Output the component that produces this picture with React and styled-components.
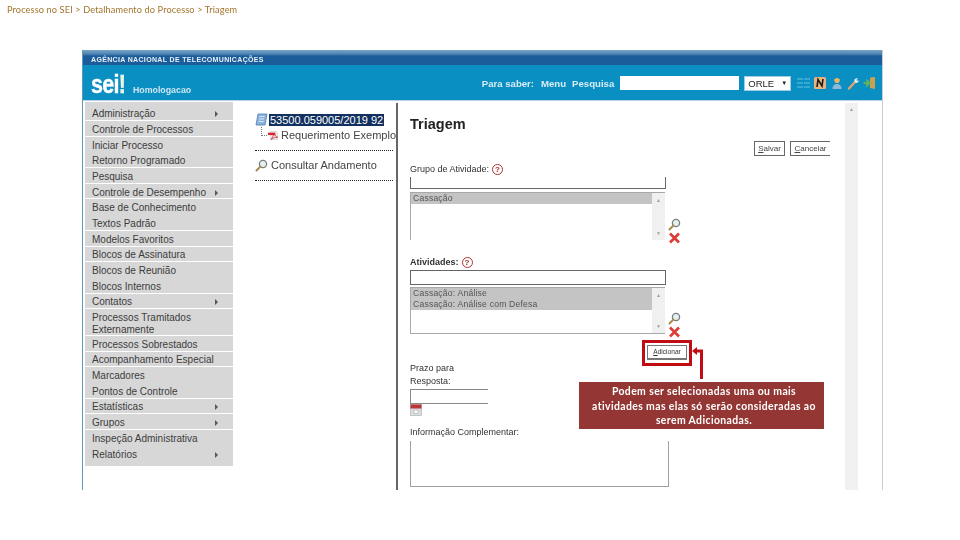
import React from "react";
import styled, { createGlobalStyle } from "styled-components";

const menuItems = [
  { label: "Administração", arrow: true, h: 19, pad: "5px 15px 0 7px" },
  { label: "Controle de Processos" },
  { label: "Iniciar Processo", flush: true },
  { label: "Retorno Programado" },
  { label: "Pesquisa" },
  { label: "Controle de Desempenho", arrow: true },
  { label: "Base de Conhecimento", flush: true },
  { label: "Textos Padrão" },
  { label: "Modelos Favoritos" },
  { label: "Blocos de Assinatura" },
  { label: "Blocos de Reunião", flush: true },
  { label: "Blocos Internos" },
  { label: "Contatos", arrow: true },
  { label: "Processos Tramitados Externamente", h: 26.6, pad: "4px 15px 0 7px" },
  { label: "Processos Sobrestados" },
  { label: "Acompanhamento Especial" },
  { label: "Marcadores", flush: true },
  { label: "Pontos de Controle" },
  { label: "Estatísticas", arrow: true },
  { label: "Grupos", arrow: true },
  { label: "Inspeção Administrativa", flush: true },
  { label: "Relatórios", arrow: true, h: 20, pad: "0 15px 1px 7px", flush: true },
];

const GlobalStyle = createGlobalStyle`
  html, body {
    margin: 0;
    padding: 0;
    background: #fff;
  }
  body {
    width: 960px;
    height: 540px;
    overflow: hidden;
    font-family: "Liberation Sans", Arial, sans-serif;
  }
`;

const Page = styled.div`
  position: relative;
  width: 960px;
  height: 540px;
  padding: 4px 0 0 7px;
  box-sizing: border-box;
`;

const PageTitle = styled.div`
  font-family: "Lato", sans-serif;
  font-size: 9.2px;
  line-height: 12px;
  letter-spacing: 0.12px;
  color: #a3752c;
  height: 12px;
  filter: blur(0.25px);
`;

const Frame = styled.div`
  width: 801px;
  height: 440px;
  margin: 34px 0 0 75px;
  display: flex;
  flex-direction: column;
  border-left: 1px solid #5e9bb8;
  border-right: 1px solid #c9ced3;
  box-sizing: border-box;
  filter: blur(0.45px);
`;

const AgencyBar = styled.div`
  height: 15px;
  flex: none;
  background: linear-gradient(#7aa2c6 0, #4d85b4 4px, #1b5c9a 6px, #1b5c9a 100%);
  color: #e8f0f6;
  font-size: 7px;
  font-weight: bold;
  line-height: 20px;
  letter-spacing: 0.34px;
  padding-left: 8px;
`;

const HeaderBar = styled.div`
  height: 35px;
  flex: none;
  background: #0a8fc3;
  box-shadow: 0 1px 0 #b7d7e6;
  display: flex;
  align-items: flex-start;
  padding: 0 6px 0 8px;
`;

const LogoSlot = styled.div`
  width: 42px;
  flex: none;
  margin-top: 7px;
`;

const Logo = styled.div`
  font-size: 25px;
  font-weight: bold;
  line-height: 24px;
  letter-spacing: -0.8px;
  color: #fff;
  -webkit-text-stroke: 0.4px #fff;
  transform: scaleX(0.86);
  transform-origin: left center;
  span {
    color: #eef5d6;
  }
`;

const Environment = styled.div`
  font-size: 8.8px;
  font-weight: bold;
  color: #cde6f1;
  margin-top: 20px;
  flex: 1;
`;

const HeaderNav = styled.div`
  display: flex;
  align-items: center;
  margin-top: 10px;
  height: 16px;
  color: #d8edf5;
  font-size: 9.6px;
  font-weight: bold;
`;

const NavLink = styled.span`
  margin-right: ${(p) => p.$gap}px;
  white-space: nowrap;
`;

const SearchInput = styled.div`
  width: 119px;
  height: 14px;
  background: #fff;
  margin-right: 5px;
`;

const UnitSelect = styled.div`
  width: 47px;
  height: 15px;
  background: #fff;
  border: 1px solid #9ccde2;
  box-sizing: border-box;
  color: #222;
  font-weight: normal;
  font-size: 9.5px;
  line-height: 13px;
  padding: 0 3px;
  margin-right: 6px;
  display: flex;
  justify-content: space-between;
  span {
    font-size: 6px;
  }
`;

const HeaderIcons = styled.div`
  display: flex;
  align-items: center;
  gap: 4.2px;
`;

const Body = styled.div`
  flex: 1;
  display: flex;
  min-height: 0;
`;

const Menu = styled.div`
  width: 148px;
  flex: none;
  margin: 2px 0 0 2px;
  display: flex;
  flex-direction: column;
  align-self: flex-start;
`;

const MenuItem = styled.div`
  height: ${(p) => p.$h}px;
  background: #d7d7d7;
  border-bottom: 1px solid ${(p) => (p.$flush ? "#d7d7d7" : "#fff")};
  box-sizing: border-box;
  display: flex;
  justify-content: space-between;
  align-items: center;
  padding: ${(p) => p.$pad};
  color: #3c3c3c;
  font-size: 10px;
  line-height: 12px;
`;

const MenuLabel = styled.span`
  width: ${(p) => (p.$wrap ? "100px" : "auto")};
  white-space: ${(p) => (p.$wrap ? "normal" : "nowrap")};
`;

const Arrow = styled.span`
  width: 0;
  height: 0;
  border-left: 3px solid #555;
  border-top: 3px solid transparent;
  border-bottom: 3px solid transparent;
`;

const TreePanel = styled.div`
  width: 165px;
  flex: none;
  padding: 10px 0 0 22px;
  box-sizing: border-box;
  border-right: 2px solid #666;
  margin-top: 3px;
  overflow: hidden;
  white-space: nowrap;
  color: #444;
  font-size: 11px;
`;

const TreeRow = styled.div`
  display: flex;
  align-items: center;
  height: ${(p) => p.$h}px;
  padding-left: ${(p) => p.$indent || 0}px;
  gap: ${(p) => p.$gap || 0}px;
`;

const ProcessNumber = styled.span`
  background: #12315f;
  color: #fff;
  font-size: 11px;
  line-height: 12px;
  padding: 0 1px;
  margin-left: 1px;
`;

const TreeConnector = styled.span`
  width: 6px;
  height: 8px;
  margin-bottom: 8px;
  border-left: 1px dotted #777;
  border-bottom: 1px dotted #777;
`;

const PdfLabel = styled.span`
  margin-left: 2px;
`;

const DashedRule = styled.div`
  border-top: 1px dotted #222;
  margin-top: ${(p) => p.$top}px;
  width: 138px;
`;

const FormPanel = styled.div`
  width: 432px;
  flex: none;
  padding: 16px 0 0 12px;
  box-sizing: border-box;
  color: #333;
  font-size: 9px;
`;

const Heading = styled.div`
  font-size: 14.5px;
  font-weight: bold;
  line-height: 16px;
  color: #222;
`;

const ActionRow = styled.div`
  display: flex;
  justify-content: flex-end;
  gap: 5px;
  margin-top: 9px;
  height: 15px;
`;

const ActionButton = styled.div`
  border: 1px solid #666;
  border-right-width: ${(p) => (p.$cut ? 0 : 1)}px;
  width: ${(p) => p.$w}px;
  box-sizing: border-box;
  text-align: center;
  font-size: 8px;
  line-height: 13px;
  color: #444;
`;

const FieldLabel = styled.div`
  display: flex;
  align-items: center;
  gap: 3px;
  font-size: 9px;
  line-height: 11px;
  height: 11px;
  margin-top: ${(p) => p.$top}px;
  color: #333;
  font-weight: ${(p) => (p.$bold ? 600 : 400)};
`;

const HelpMark = styled.span`
  width: 9px;
  height: 9px;
  border: 1.5px solid #b03030;
  border-radius: 50%;
  color: #a52a2a;
  font-size: 8px;
  font-weight: bold;
  line-height: 9px;
  text-align: center;
`;

const TextBox = styled.div`
  width: 256px;
  height: ${(p) => p.$h}px;
  margin-top: ${(p) => p.$top}px;
  border: 1px solid #666;
  border-top-width: ${(p) => (p.$open ? 0 : 1)}px;
  box-sizing: border-box;
`;

const ListRow = styled.div`
  display: flex;
  align-items: flex-end;
  margin-top: ${(p) => p.$top}px;
`;

const ListBox = styled.div`
  width: 255px;
  height: ${(p) => p.$h}px;
  display: flex;
  border: 1px solid #a8a8a8;
  border-right: 0;
  border-bottom-width: ${(p) => (p.$open ? 0 : 1)}px;
  box-sizing: border-box;
`;

const ListOptions = styled.div`
  flex: 1;
`;

const ListOption = styled.div`
  background: #c4c4c4;
  height: 11.2px;
  line-height: 10.6px;
  padding-left: 2px;
  font-size: 8.6px;
  letter-spacing: 0.2px;
  color: #555;
`;

const ScrollBar = styled.div`
  width: 13px;
  background: #f0f0f0;
  display: flex;
  flex-direction: column;
  justify-content: space-between;
  align-items: center;
  padding: 4px 0;
  box-sizing: border-box;
  color: #a0a0a0;
  font-size: 5px;
  line-height: 6px;
`;

const ListTools = styled.div`
  display: flex;
  flex-direction: column;
  gap: 1px;
  margin-left: 3px;
  margin-bottom: -4px;
`;

const AddRow = styled.div`
  display: flex;
  margin: 11px 0 0 237px;
`;

const AddButton = styled.div`
  width: 40px;
  height: 15px;
  box-sizing: border-box;
  border: 1px solid #777;
  border-bottom-width: 2px;
  font-size: 6.6px;
  line-height: 12px;
  text-align: center;
  color: #333;
`;

const DateBox = styled.div`
  width: 78px;
  height: 15px;
  border: 1px solid #888;
  border-right: 0;
  box-sizing: border-box;
  margin-top: 2px;
`;

const CalendarRow = styled.div`
  height: 12px;
`;

const NotesBox = styled.div`
  width: 259px;
  height: 46px;
  margin-top: 3px;
  border: 1px solid #a0a0a0;
  border-top: 0;
  box-sizing: border-box;
`;

const PanelScroll = styled.div`
  width: 13px;
  flex: none;
  margin: 3px 0 0 15px;
  background: #f0f0f0;
  text-align: center;
  color: #a0a0a0;
  font-size: 5px;
  line-height: 12px;
`;

const Highlight = styled.div`
  position: absolute;
  left: 642px;
  top: 340px;
  width: 50px;
  height: 26px;
  border: 3px solid #c00d14;
  box-sizing: border-box;
`;

const Callout = styled.div`
  position: absolute;
  left: 579px;
  top: 382px;
  width: 245px;
  height: 47px;
  background: #943634;
  color: #fff;
  font-family: "Lato", sans-serif;
  font-size: 10.4px;
  font-weight: bold;
  line-height: 14.5px;
  letter-spacing: 0.41px;
  text-align: center;
  padding: 2px 0 0 5px;
  box-sizing: border-box;
  filter: blur(0.2px);
`;

const Pointer = styled.svg`
  position: absolute;
  left: 690px;
  top: 346px;
`;

const BookIcon = () => (
  <svg width="13" height="13" viewBox="0 0 13 13">
    <path d="M3 1h9l-2 11H1z" fill="#8eb4dc" stroke="#4a7db0" strokeWidth=".8" />
    <path d="M4.5 3.5h5M4 6h5M3.6 8.500h5" stroke="#e3eefa" strokeWidth=".8" />
  </svg>
);

const PdfIcon = () => (
  <svg width="14" height="13" viewBox="0 0 13 12">
    <path d="M3 1h7l2 2v8H3z" fill="#eee" stroke="#bbb" strokeWidth=".6" />
    <path d="M0 2.500h9v3H0z" fill="#d8262c" />
    <path d="M4 11c1-3 3-5 4-8 0 3 2 5 4 5-3 0-6 1-8 3z" fill="none" stroke="#d8262c" strokeWidth="1" />
  </svg>
);

const LensIcon = ({ size = 13 }) => (
  <svg width={size} height={size} viewBox="0 0 13 13">
    <circle cx="8" cy="5" r="3.600" fill="#e9eef0" stroke="#77817f" strokeWidth="1.300" />
    <path d="M5.300 7.600 1.500 11.500" stroke="#a98a4c" strokeWidth="2" strokeLinecap="round" />
  </svg>
);

const CrossIcon = () => (
  <svg width="13" height="12" viewBox="0 0 13 12">
    <path d="M2 1.500 11 10.500M11 1.500 2 10.500" stroke="#dd3b35" strokeWidth="2.600" />
  </svg>
);

const CalendarIcon = () => (
  <svg width="12" height="12" viewBox="0 0 12 12">
    <rect x="0.5" y="0.5" width="11" height="11" fill="#ddd" stroke="#aaa" strokeWidth=".6" />
    <rect x="0.5" y="0.5" width="11" height="4" fill="#b8363a" />
    <rect x="4" y="6" width="4" height="3.500" fill="#fff" stroke="#999" strokeWidth=".5" />
  </svg>
);

const HeaderGlyphs = () => (
  <HeaderIcons>
    <svg width="13" height="12" viewBox="0 0 13 12">
      <path d="M0 2h6M7 2h6M0 6h6M7 6h6M0 10h6M7 10h6" stroke="#66c4e4" strokeWidth="1" />
    </svg>
    <svg width="12" height="12" viewBox="0 0 12 12">
      <rect width="12" height="12" rx="1.500" fill="#e9b27c" />
      <path d="M3 10 4 2.500 8 9l1-7" fill="none" stroke="#1a1a1a" strokeWidth="1.600" />
    </svg>
    <svg width="12" height="13" viewBox="0 0 12 13">
      <circle cx="6" cy="3.500" r="2.600" fill="#e5b17d" />
      <path d="M3.400 2.800h5.200" stroke="#e9c14a" strokeWidth="1.500" />
      <path d="M1.500 12c0-3.500 2-5 4.500-5s4.500 1.500 4.500 5z" fill="#8fb9d8" />
    </svg>
    <svg width="12" height="13" viewBox="0 0 12 13">
      <path d="M2 11.500 8 5" stroke="#e3a36b" strokeWidth="2.400" strokeLinecap="round" />
      <path d="M7.500 4.500a2.500 2.500 0 0 1 3.500-3l-1.500 1.500 1 1 1-1a2.500 2.500 0 0 1-3 3z" fill="#e8eef0" />
    </svg>
    <svg width="13" height="14" viewBox="0 0 13 14">
      <path d="M7 1.500 12 1v12l-5-1z" fill="#c9a24f" />
      <path d="M0.500 7h5M4 4.500v5l3-2.500z" stroke="#5fb060" strokeWidth="1.800" fill="#5fb060" />
    </svg>
  </HeaderIcons>
);

const App = () => {
  return (
    <Page>
      <GlobalStyle />
      <PageTitle>Processo no SEI &gt; Detalhamento do Processo &gt; Triagem</PageTitle>
      <Frame>
        <AgencyBar>AGÊNCIA NACIONAL DE TELECOMUNICAÇÕES</AgencyBar>
        <HeaderBar>
          <LogoSlot>
            <Logo>
              sei<span>!</span>
            </Logo>
          </LogoSlot>
          <Environment>Homologacao</Environment>
          <HeaderNav>
            <NavLink $gap={7}>Para saber:</NavLink>
            <NavLink $gap={6}>Menu</NavLink>
            <NavLink $gap={6}>Pesquisa</NavLink>
            <SearchInput />
            <UnitSelect>
              ORLE <span>▼</span>
            </UnitSelect>
            <HeaderGlyphs />
          </HeaderNav>
        </HeaderBar>
        <Body>
          <Menu>
            {menuItems.map(({ label, arrow, h, pad, flush }) => (
              <MenuItem key={label} $h={h || 15.7} $pad={pad || "3px 15px 0 7px"} $flush={flush}>
                <MenuLabel $wrap={h === 26.6}>{label}</MenuLabel>
                {arrow && <Arrow />}
              </MenuItem>
            ))}
          </Menu>
          <TreePanel>
            <TreeRow $h={13}>
              <BookIcon />
              <ProcessNumber>53500.059005/2019 92</ProcessNumber>
            </TreeRow>
            <TreeRow $h={18} $indent={6} $gap={1}>
              <TreeConnector />
              <PdfIcon />
              <PdfLabel>Requerimento Exemplo</PdfLabel>
            </TreeRow>
            <DashedRule $top={6} />
            <TreeRow $h={28} $gap={3}>
              <LensIcon />
              <span>Consultar Andamento</span>
            </TreeRow>
            <DashedRule $top={1} />
          </TreePanel>
          <FormPanel>
            <Heading>Triagem</Heading>
            <ActionRow>
              <ActionButton $w={31}><u>S</u>alvar</ActionButton>
              <ActionButton $w={40} $cut><u>C</u>ancelar</ActionButton>
            </ActionRow>
            <FieldLabel $top={8}>
              Grupo de Atividade: <HelpMark>?</HelpMark>
            </FieldLabel>
            <TextBox $h={12} $top={2} $open />
            <ListRow $top={3}>
              <ListBox $h={48} $open>
                <ListOptions>
                  <ListOption>Cassação</ListOption>
                </ListOptions>
                <ScrollBar>
                  <span>▲</span>
                  <span>▼</span>
                </ScrollBar>
              </ListBox>
              <ListTools>
                <LensIcon />
                <CrossIcon />
              </ListTools>
            </ListRow>
            <FieldLabel $top={17} $bold>
              Atividades: <HelpMark>?</HelpMark>
            </FieldLabel>
            <TextBox $h={15} $top={2} />
            <ListRow $top={2}>
              <ListBox $h={47}>
                <ListOptions>
                  <ListOption>Cassação: Análise</ListOption>
                  <ListOption>Cassação: Análise com Defesa</ListOption>
                </ListOptions>
                <ScrollBar>
                  <span>▲</span>
                  <span>▼</span>
                </ScrollBar>
              </ListBox>
              <ListTools>
                <LensIcon />
                <CrossIcon />
              </ListTools>
            </ListRow>
            <AddRow>
              <AddButton><u>A</u>dicionar</AddButton>
            </AddRow>
            <FieldLabel $top={3}>Prazo para</FieldLabel>
            <FieldLabel $top={2}>Resposta:</FieldLabel>
            <DateBox />
            <CalendarRow>
              <CalendarIcon />
            </CalendarRow>
            <FieldLabel $top={11}>Informação Complementar:</FieldLabel>
            <NotesBox />
          </FormPanel>
          <PanelScroll>▲</PanelScroll>
        </Body>
      </Frame>
      <Highlight />
      <Pointer width="16" height="33" viewBox="0 0 16 33">
        <path d="M11.500 33V5H6" fill="none" stroke="#c00d14" strokeWidth="3" />
        <path d="M2 5 7 1v8z" fill="#c00d14" />
      </Pointer>
      <Callout>
        Podem ser selecionadas uma ou mais
        <br />
        atividades mas elas só serão consideradas ao
        <br />
        serem Adicionadas.
      </Callout>
    </Page>
  );
};

export default App;
